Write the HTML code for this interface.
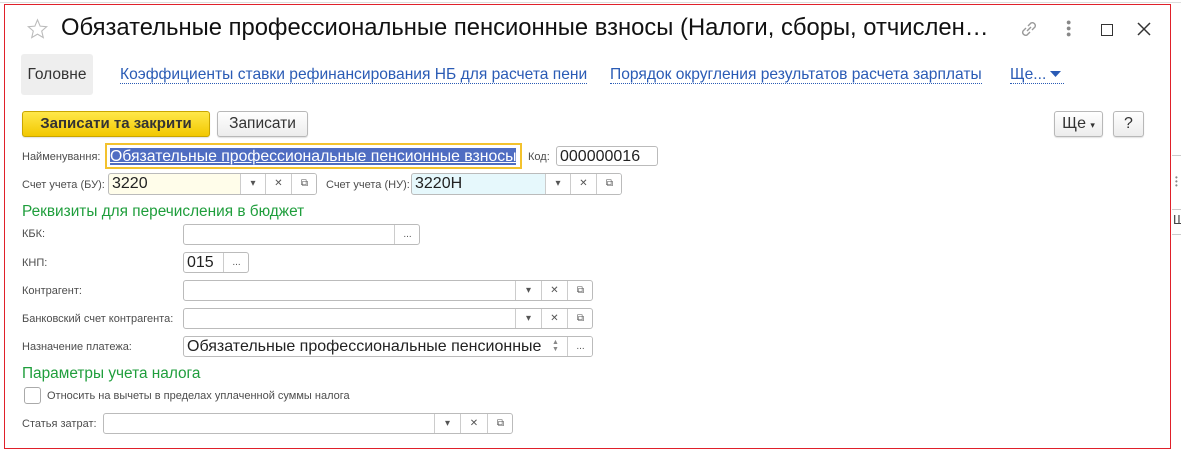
<!DOCTYPE html>
<html><head><meta charset="utf-8"><style>
*{box-sizing:border-box;margin:0;padding:0}
body{width:1181px;height:452px;background:#fff;position:relative;overflow:hidden;font-family:"Liberation Sans",Arial,sans-serif;color:#333}
.a{position:absolute}
.lbl{position:absolute;font-size:11px;color:#4d4d4d;white-space:nowrap;line-height:12px}
.inp{position:absolute;border:1px solid #bbb;border-radius:3px;background:#fff;height:21px;font-size:16px;color:#222;line-height:19px;padding-left:3px;white-space:nowrap;overflow:hidden}
.seg{position:absolute;top:0;bottom:0;border-left:1px solid #ccc;font-size:10px;color:#555;text-align:center;line-height:19px}
.btn{position:absolute;border:1px solid #b8b8b8;border-radius:3px;background:linear-gradient(#fff,#ececec);font-size:15px;text-align:center;line-height:24px;color:#333;box-shadow:0 1px 1px rgba(0,0,0,.12)}
.lnk{position:absolute;top:66px;font-size:15.6px;color:#2a5bb5;border-bottom:1px dotted #2a5bb5;line-height:17px;white-space:nowrap}
.h{position:absolute;font-size:15.4px;color:#1f9e3c;white-space:nowrap}
</style></head><body>
<div class="a" style="left:0;top:2px;width:1181px;height:1px;background:#ddd"></div>
<div class="a" style="left:4px;top:4px;width:1167px;height:445px;border:1px solid #e0202a"></div>
<div class="a" style="left:1172px;top:155px;width:9px;height:1px;background:#ccc"></div>
<div class="a" style="left:1172px;top:209px;width:9px;height:1px;background:#ccc"></div>
<div class="a" style="left:1172px;top:234px;width:9px;height:1px;background:#ccc"></div>
<div class="a" style="left:1175px;top:176px;font-size:8px;line-height:4px;color:#888">•<br>•<br>•</div>
<div class="a" style="left:1173px;top:212px;font-size:13px;color:#444">Ш</div>

<svg class="a" style="left:26px;top:18px" width="23" height="22" viewBox="0 0 24 24"><path d="M12 2l2.9 6.9 7.1.6-5.4 4.7 1.7 7.2L12 17.6 5.7 21.4l1.7-7.2L2 9.5l7.1-.6z" fill="none" stroke="#bbb" stroke-width="1.2"/></svg>
<div class="a" style="left:61px;top:13px;font-size:23.8px;color:#111;white-space:nowrap;line-height:30px">Обязательные профессиональные пенсионные взносы (Налоги, сборы, отчислен…</div>
<svg class="a" style="left:1018px;top:18px" width="22" height="22" viewBox="0 0 22 22" fill="none" stroke="#999" stroke-width="1.4"><path d="M9 13l4-4"/><path d="M8 10l-3 3a3 3 0 0 0 4 4l3-3"/><path d="M14 12l3-3a3 3 0 0 0-4-4l-3 3"/></svg>
<div class="a" style="left:1066px;top:19px;width:5px;font-size:9px;line-height:6px;color:#888">●<br>●<br>●</div>
<div class="a" style="left:1101px;top:24px;width:12px;height:12px;border:1.5px solid #333"></div>
<svg class="a" style="left:1137px;top:22px" width="14" height="14" viewBox="0 0 14 14" stroke="#333" stroke-width="1.5"><path d="M1 1l12 12M13 1L1 13"/></svg>

<div class="a" style="left:21px;top:54px;width:72px;height:41px;background:#eee;border-radius:3px;font-size:15.5px;color:#333;text-align:center;line-height:41px">Головне</div>
<div class="lnk" style="left:120px">Коэффициенты ставки рефинансирования НБ для расчета пени</div>
<div class="lnk" style="left:610px">Порядок округления результатов расчета зарплаты</div>
<div class="lnk" style="left:1010px;width:54px">Ще...</div>
<svg class="a" style="left:1050px;top:71px" width="12" height="7"><path d="M0 0h11L5.5 6z" fill="#2a5bb5"/></svg>

<div class="btn" style="left:22px;top:111px;width:188px;height:26px;background:linear-gradient(#ffe84a,#f2c800);border-color:#c9a600;font-weight:bold;color:#333">Записати та закрити</div>
<div class="btn" style="left:217px;top:111px;width:91px;height:26px;font-size:15.5px">Записати</div>
<div class="btn" style="left:1054px;top:111px;width:49px;height:26px;font-size:16px">Ще <span style="font-size:9px">▾</span></div>
<div class="btn" style="left:1113px;top:111px;width:31px;height:26px;font-size:16px">?</div>

<div class="lbl" style="left:22px;top:151px">Найменування:</div>
<div class="a" style="left:105px;top:143px;width:417px;height:26px;border:2px solid #f3c22e"></div>
<div class="a" style="left:110px;top:148px;width:406px;height:17px;background:#4f6dc2;color:#fff;font-size:15.8px;line-height:17px;white-space:nowrap;overflow:hidden;text-decoration:underline">Обязательные профессиональные пенсионные взносы</div>
<div class="lbl" style="left:528px;top:151px">Код:</div>
<div class="inp" style="left:556px;top:146px;width:102px;height:20px;line-height:19px">000000016</div>

<div class="lbl" style="left:22px;top:179px">Счет учета (БУ):</div>
<div class="inp" style="left:108px;top:173px;width:209px;height:22px;background:#fffdea">3220<div class="seg" style="left:131px;width:25px;background:#fff">▾</div><div class="seg" style="left:156px;width:26px;background:#fff">✕</div><div class="seg" style="left:182px;width:26px;background:#fff">⧉</div></div>
<div class="lbl" style="left:326px;top:179px">Счет учета (НУ):</div>
<div class="inp" style="left:411px;top:173px;width:211px;height:22px;background:#e6f8fc">3220Н<div class="seg" style="left:133px;width:25px;background:#fff">▾</div><div class="seg" style="left:158px;width:26px;background:#fff">✕</div><div class="seg" style="left:184px;width:26px;background:#fff">⧉</div></div>

<div class="h" style="left:22px;top:203px">Реквизиты для перечисления в бюджет</div>
<div class="lbl" style="left:22px;top:228px">КБК:</div>
<div class="inp" style="left:183px;top:224px;width:237px"><div class="seg" style="left:210px;width:26px">...</div></div>
<div class="lbl" style="left:22px;top:257px">КНП:</div>
<div class="inp" style="left:183px;top:252px;width:66px">015<div class="seg" style="left:39px;width:26px">...</div></div>
<div class="lbl" style="left:22px;top:285px">Контрагент:</div>
<div class="inp" style="left:183px;top:280px;width:410px"><div class="seg" style="left:331px;width:26px">▾</div><div class="seg" style="left:357px;width:26px">✕</div><div class="seg" style="left:383px;width:26px">⧉</div></div>
<div class="lbl" style="left:22px;top:313px">Банковский счет контрагента:</div>
<div class="inp" style="left:183px;top:308px;width:410px"><div class="seg" style="left:331px;width:26px">▾</div><div class="seg" style="left:357px;width:26px">✕</div><div class="seg" style="left:383px;width:26px">⧉</div></div>
<div class="lbl" style="left:22px;top:341px">Назначение платежа:</div>
<div class="inp" style="left:183px;top:336px;width:410px;font-size:16px">Обязательные профессиональные пенсионные<div class="a" style="left:368px;top:2px;font-size:7px;line-height:7px;color:#888;background:#fff">▲<br>▼</div><div class="seg" style="left:383px;width:26px;background:#fff">...</div></div>

<div class="h" style="left:22px;top:365px">Параметры учета налога</div>
<div class="a" style="left:24px;top:387px;width:17px;height:17px;border:1px solid #aaa;border-radius:3px"></div>
<div class="lbl" style="left:47px;top:390px">Относить на вычеты в пределах уплаченной суммы налога</div>
<div class="lbl" style="left:22px;top:418px">Статья затрат:</div>
<div class="inp" style="left:103px;top:413px;width:410px"><div class="seg" style="left:330px;width:26px">▾</div><div class="seg" style="left:356px;width:27px">✕</div><div class="seg" style="left:383px;width:26px">⧉</div></div>
</body></html>
